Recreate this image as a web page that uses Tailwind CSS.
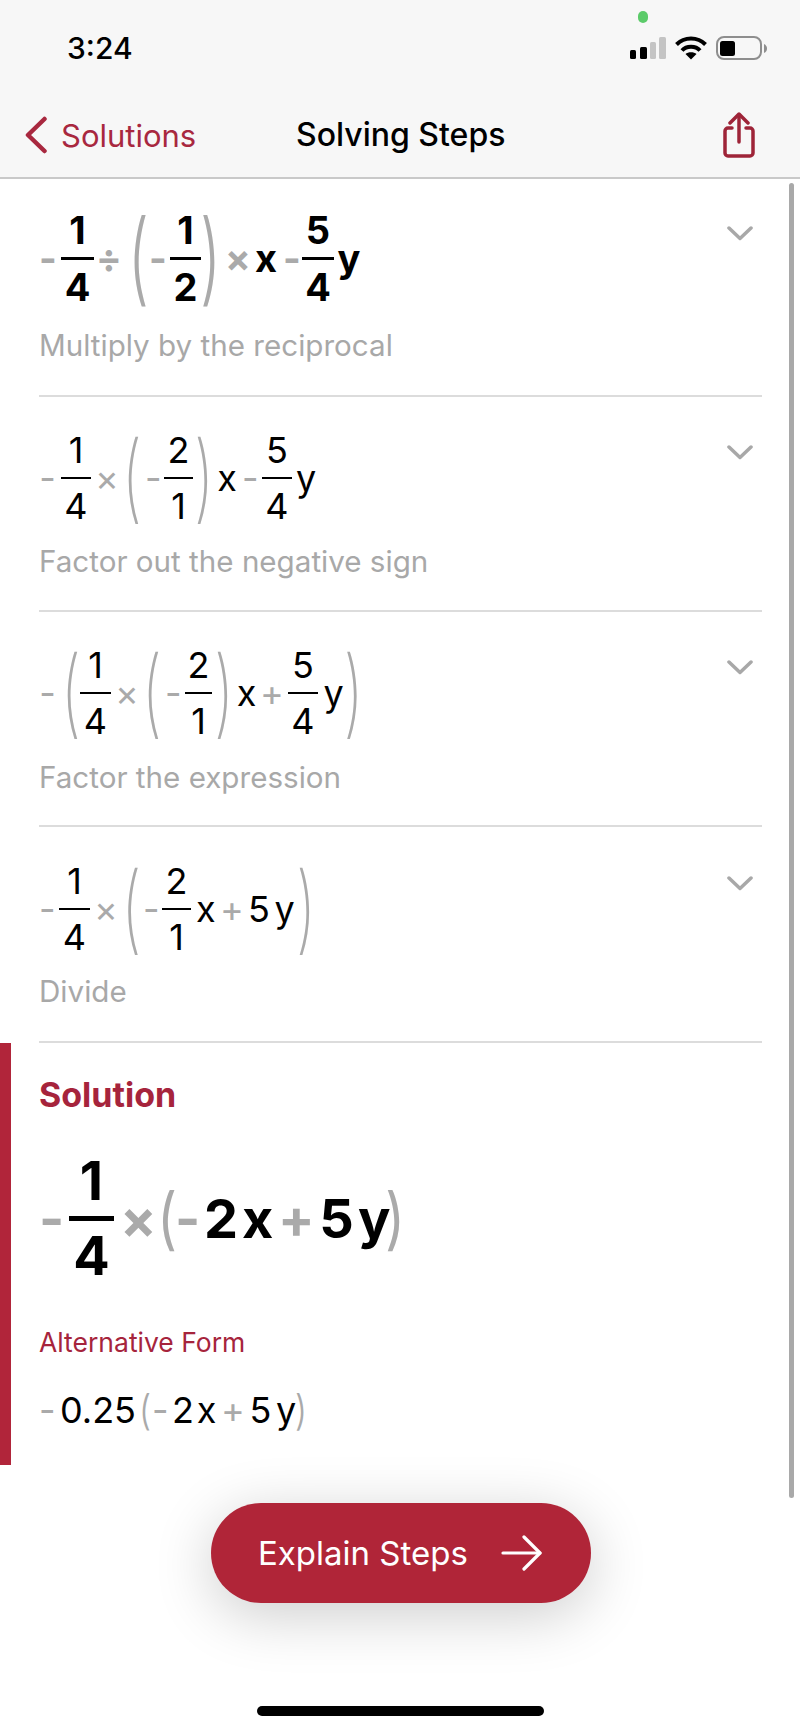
<!DOCTYPE html>
<html lang="en">
<head>
  <meta charset="UTF-8">
  <meta name="viewport" content="width=device-width, initial-scale=1.0">
  <title>Solving Steps</title>
  <script src="https://cdn.jsdelivr.net/npm/@tailwindcss/browser@4"></script>
</head>
<body class="bg-white text-black font-['Inter',sans-serif]">
<div class="relative w-[800px] h-[1731px] overflow-hidden bg-white">

  <!-- Header -->
  <header class="h-[179px] bg-[#f7f7f7] border-b-2 border-[#c9c9c9]">
    <div class="h-[96px] flex items-center pl-[67px]">
      <span class="text-[30px] font-medium leading-none">3:24</span>
      <div class="ml-auto mr-[33px] flex items-center">
        <svg width="36" height="24" viewBox="0 0 36 24">
          <rect x="0" y="14" width="6" height="9" rx="1.5" fill="#000"/>
          <rect x="10" y="11" width="7" height="12" rx="1.5" fill="#000"/>
          <rect x="20" y="6" width="6" height="17" rx="1.5" fill="#c4c4c4"/>
          <rect x="29" y="1" width="7" height="22" rx="1.5" fill="#c4c4c4"/>
        </svg>
        <svg class="ml-[9px]" width="32" height="24" viewBox="0 0 32 24" fill="none" stroke="#000" stroke-width="4">
          <path d="M1.5 8.5 C9.5 0.5 22.5 0.5 30.5 8.5"/>
          <path d="M7 14.5 C11.5 9.5 20.5 9.5 25 14.5"/>
          <path d="M16 23.5 L10.5 18 C13 15.6 19 15.6 21.5 18 Z" fill="#000" stroke="none"/>
        </svg>
        <svg class="ml-[9px]" width="51" height="24" viewBox="0 0 51 24">
          <rect x="1" y="1" width="44" height="22" rx="7" fill="none" stroke="#8e8e8e" stroke-width="2"/>
          <rect x="4" y="5" width="15" height="15" rx="2.5" fill="#000"/>
          <path d="M48 8 C50 9 51 10.5 51 12.5 C51 14.5 50 16 48 17 Z" fill="#8e8e8e"/>
        </svg>
      </div>
    </div>
    <div class="h-[78px] flex items-center pl-[25px] pr-[45px]">
      <div class="w-[271px] flex items-center">
        <svg width="22" height="38" viewBox="0 0 22 38" fill="none" stroke="#a8283f" stroke-width="4.5" stroke-linecap="round" stroke-linejoin="round">
          <path d="M19.5 3 L3 19 L19.5 35"/>
        </svg>
        <span class="ml-[14px] text-[31px] leading-none text-[#a8283f]">Solutions</span>
      </div>
      <span class="text-[32px] font-medium leading-none">Solving Steps</span>
      <svg class="ml-auto mt-[-1px]" width="32" height="46" viewBox="0 0 32 46" fill="none" stroke="#9e2438" stroke-width="3.5" stroke-linecap="round" stroke-linejoin="round">
        <path d="M9 16 H5 A3 3 0 0 0 2 19 V41 A3 3 0 0 0 5 44 H27 A3 3 0 0 0 30 41 V19 A3 3 0 0 0 27 16 H23"/>
        <path d="M16 30 V3"/>
        <path d="M7 11 L16 2 L25 11"/>
      </svg>
    </div>
  </header>

  <main class="pl-[39px] pr-[38px]">

    <!-- Step 1 -->
    <section class="h-[218px] pt-[31px] border-b-2 border-[#dcdcdc] flex items-start justify-between">
      <div>
        <div class="h-[96px] flex items-center text-[38px] font-bold text-[#aaa]">
          <span class="w-[17px] shrink-0 text-center">-</span>
          <div class="ml-[5px] w-[33px] shrink-0 flex flex-col items-center text-black"><span class="leading-[44px]">1</span><span class="my-[5px] w-full h-[3px] bg-black"></span><span class="leading-[44px]">4</span></div>
          <span class="ml-[1px] w-[28px] shrink-0 text-center">÷</span>
          <div class="ml-[11px] w-[9px] shrink-0 flex justify-center"><span class="font-light text-[60px] leading-none scale-y-[1.68] -translate-y-[2px]">(</span></div>
          <span class="ml-[6px] w-[17px] shrink-0 text-center">-</span>
          <div class="ml-[4px] w-[31px] shrink-0 flex flex-col items-center text-black"><span class="leading-[44px]">1</span><span class="my-[5px] w-full h-[3px] bg-black"></span><span class="leading-[44px]">2</span></div>
          <div class="ml-[5px] w-[9px] shrink-0 flex justify-center"><span class="font-light text-[60px] leading-none scale-y-[1.68] -translate-y-[2px]">)</span></div>
          <span class="ml-[10px] w-[26px] shrink-0 text-center">×</span>
          <span class="ml-[3px] w-[24px] shrink-0 text-center text-black">x</span>
          <span class="ml-[5px] w-[14px] shrink-0 text-center">-</span>
          <div class="ml-[5px] w-[32px] shrink-0 flex flex-col items-center text-black"><span class="leading-[44px]">5</span><span class="my-[5px] w-full h-[3px] bg-black"></span><span class="leading-[44px]">4</span></div>
          <span class="ml-[2px] w-[26px] shrink-0 text-center text-black">y</span>
        </div>
        <p class="mt-[19px] text-[29.6px] leading-[40px] text-[#a8a8a8]">Multiply by the reciprocal</p>
      </div>
      <svg class="mt-[16px] mr-[9px]" width="26" height="15" viewBox="0 0 26 15" fill="none" stroke="#a8a8a8" stroke-width="3.5" stroke-linecap="round" stroke-linejoin="round"><path d="M2 2 L13 12.5 L24 2"/></svg>
    </section>

    <!-- Step 2 -->
    <section class="h-[215px] pt-[35px] border-b-2 border-[#dcdcdc] flex items-start justify-between">
      <div>
        <div class="h-[92px] flex items-center text-[36px] text-[#aaa]">
          <span class="w-[17px] shrink-0 text-center">-</span>
          <div class="ml-[5px] w-[30px] shrink-0 flex flex-col items-center text-black"><span class="leading-[44px]">1</span><span class="my-[5px] w-full h-[2px] bg-black"></span><span class="leading-[44px]">4</span></div>
          <span class="ml-[3px] w-[26px] shrink-0 text-center">×</span>
          <div class="ml-[7px] w-[10px] shrink-0 flex justify-center"><span class="font-extralight text-[60px] leading-none scale-y-[1.6] -translate-y-[2px]">(</span></div>
          <span class="ml-[8px] w-[14px] shrink-0 text-center">-</span>
          <div class="ml-[5px] w-[29px] shrink-0 flex flex-col items-center text-black"><span class="leading-[44px]">2</span><span class="my-[5px] w-full h-[2px] bg-black"></span><span class="leading-[44px]">1</span></div>
          <div class="ml-[6px] w-[10px] shrink-0 flex justify-center"><span class="font-extralight text-[60px] leading-none scale-y-[1.6] -translate-y-[2px]">)</span></div>
          <span class="ml-[7px] w-[22px] shrink-0 text-center text-black">x</span>
          <span class="ml-[4px] w-[14px] shrink-0 text-center">-</span>
          <div class="ml-[6px] w-[30px] shrink-0 flex flex-col items-center text-black"><span class="leading-[44px]">5</span><span class="my-[5px] w-full h-[2px] bg-black"></span><span class="leading-[44px]">4</span></div>
          <span class="ml-[3px] w-[22px] shrink-0 text-center text-black">y</span>
        </div>
        <p class="mt-[17px] text-[29.6px] leading-[40px] text-[#a8a8a8]">Factor out the negative sign</p>
      </div>
      <svg class="mt-[13px] mr-[9px]" width="26" height="15" viewBox="0 0 26 15" fill="none" stroke="#a8a8a8" stroke-width="3.5" stroke-linecap="round" stroke-linejoin="round"><path d="M2 2 L13 12.5 L24 2"/></svg>
    </section>

    <!-- Step 3 -->
    <section class="h-[215px] pt-[35px] border-b-2 border-[#dcdcdc] flex items-start justify-between">
      <div>
        <div class="h-[92px] flex items-center text-[36px] text-[#aaa]">
          <span class="w-[17px] shrink-0 text-center">-</span>
          <div class="ml-[11px] w-[8px] shrink-0 flex justify-center"><span class="font-extralight text-[60px] leading-none scale-y-[1.6] -translate-y-[2px]">(</span></div>
          <div class="ml-[5px] w-[31px] shrink-0 flex flex-col items-center text-black"><span class="leading-[44px]">1</span><span class="my-[5px] w-full h-[2px] bg-black"></span><span class="leading-[44px]">4</span></div>
          <span class="ml-[4px] w-[24px] shrink-0 text-center">×</span>
          <div class="ml-[8px] w-[10px] shrink-0 flex justify-center"><span class="font-extralight text-[60px] leading-none scale-y-[1.6] -translate-y-[2px]">(</span></div>
          <span class="ml-[8px] w-[14px] shrink-0 text-center">-</span>
          <div class="ml-[6px] w-[27px] shrink-0 flex flex-col items-center text-black"><span class="leading-[44px]">2</span><span class="my-[5px] w-full h-[2px] bg-black"></span><span class="leading-[44px]">1</span></div>
          <div class="ml-[7px] w-[10px] shrink-0 flex justify-center"><span class="font-extralight text-[60px] leading-none scale-y-[1.6] -translate-y-[2px]">)</span></div>
          <span class="ml-[7px] w-[21px] shrink-0 text-center text-black">x</span>
          <span class="ml-[3px] w-[24px] shrink-0 text-center">+</span>
          <div class="ml-[4px] w-[30px] shrink-0 flex flex-col items-center text-black"><span class="leading-[44px]">5</span><span class="my-[5px] w-full h-[2px] bg-black"></span><span class="leading-[44px]">4</span></div>
          <span class="ml-[5px] w-[21px] shrink-0 text-center text-black">y</span>
          <div class="ml-[5px] w-[9px] shrink-0 flex justify-center"><span class="font-extralight text-[60px] leading-none scale-y-[1.6] -translate-y-[2px]">)</span></div>
        </div>
        <p class="mt-[18px] text-[29.6px] leading-[40px] text-[#a8a8a8]">Factor the expression</p>
      </div>
      <svg class="mt-[13px] mr-[9px]" width="26" height="15" viewBox="0 0 26 15" fill="none" stroke="#a8a8a8" stroke-width="3.5" stroke-linecap="round" stroke-linejoin="round"><path d="M2 2 L13 12.5 L24 2"/></svg>
    </section>

    <!-- Step 4 -->
    <section class="h-[216px] pt-[36px] border-b-2 border-[#dcdcdc] flex items-start justify-between">
      <div>
        <div class="h-[92px] flex items-center text-[36px] text-[#aaa]">
          <span class="w-[15px] shrink-0 text-center">-</span>
          <div class="ml-[5px] w-[31px] shrink-0 flex flex-col items-center text-black"><span class="leading-[44px]">1</span><span class="my-[5px] w-full h-[2px] bg-black"></span><span class="leading-[44px]">4</span></div>
          <span class="ml-[4px] w-[23px] shrink-0 text-center">×</span>
          <div class="ml-[10px] w-[9px] shrink-0 flex justify-center"><span class="font-extralight text-[60px] leading-none scale-y-[1.6] -translate-y-[2px]">(</span></div>
          <span class="ml-[7px] w-[14px] shrink-0 text-center">-</span>
          <div class="ml-[5px] w-[29px] shrink-0 flex flex-col items-center text-black"><span class="leading-[44px]">2</span><span class="my-[5px] w-full h-[2px] bg-black"></span><span class="leading-[44px]">1</span></div>
          <span class="ml-[5px] w-[18px] shrink-0 text-center text-black">x</span>
          <span class="ml-[6px] w-[24px] shrink-0 text-center">+</span>
          <span class="ml-[3px] w-[24px] shrink-0 text-center text-black">5</span>
          <span class="ml-[3px] w-[21px] shrink-0 text-center text-black">y</span>
          <div class="ml-[7px] w-[8px] shrink-0 flex justify-center"><span class="font-extralight text-[60px] leading-none scale-y-[1.6] -translate-y-[2px]">)</span></div>
        </div>
        <p class="mt-[16px] text-[29.6px] leading-[40px] text-[#a8a8a8]">Divide</p>
      </div>
      <svg class="mt-[13px] mr-[9px]" width="26" height="15" viewBox="0 0 26 15" fill="none" stroke="#a8a8a8" stroke-width="3.5" stroke-linecap="round" stroke-linejoin="round"><path d="M2 2 L13 12.5 L24 2"/></svg>
    </section>
  </main>

  <!-- Solution -->
  <section class="ml-0 h-[422px] w-[761px] border-l-[11px] border-[#b1253a] pl-[28px]">
    <h2 class="pt-[30px] text-[34px] leading-[44px] font-bold text-[#a6243c]">Solution</h2>
    <div class="mt-[41px] h-[120px] flex items-center text-[54px] font-bold text-[#aaa]">
      <span class="w-[22px] shrink-0 text-center">-</span>
      <div class="ml-[8px] w-[45px] shrink-0 flex flex-col items-center text-black"><span class="leading-[60px]">1</span><span class="my-[5px] w-full h-[5px] bg-black"></span><span class="leading-[60px]">4</span></div>
      <span class="ml-[6px] w-[33px] shrink-0 text-center">×</span>
      <div class="ml-[9px] w-[10px] shrink-0 flex justify-center"><span class="font-normal text-[54px] leading-none scale-y-[1.25]">(</span></div>
      <span class="ml-[3px] w-[21px] shrink-0 text-center">-</span>
      <span class="ml-[8px] w-[32px] shrink-0 text-center text-black">2</span>
      <span class="ml-[6px] w-[28px] shrink-0 text-center text-black">x</span>
      <span class="ml-[8px] w-[34px] shrink-0 text-center">+</span>
      <span class="ml-[7px] w-[35px] shrink-0 text-center text-black">5</span>
      <span class="ml-[4px] w-[32px] shrink-0 text-center text-black">y</span>
      <div class="w-[10px] shrink-0 flex justify-center"><span class="font-normal text-[54px] leading-none scale-y-[1.25]">)</span></div>
    </div>
    <p class="mt-[46px] text-[26.5px] leading-[36px] text-[#a6243c]">Alternative Form</p>
    <div class="mt-[28px] h-[44px] flex items-center text-[36px] text-[#aaa]">
      <span class="w-[16px] shrink-0 text-center">-</span>
      <span class="ml-[5px] w-[76px] shrink-0 text-center text-black">0.25</span>
      <div class="ml-[6px] w-[6px] shrink-0 flex justify-center"><span class="font-light scale-y-[1.15]">(</span></div>
      <span class="ml-[4px] w-[13px] shrink-0 text-center">-</span>
      <span class="ml-[6px] w-[24px] shrink-0 text-center text-black">2</span>
      <span class="ml-[1px] w-[21px] shrink-0 text-center text-black">x</span>
      <span class="ml-[4px] w-[23px] shrink-0 text-center">+</span>
      <span class="ml-[5px] w-[23px] shrink-0 text-center text-black">5</span>
      <span class="ml-[4px] w-[20px] shrink-0 text-center text-black">y</span>
      <div class="ml-[2px] w-[6px] shrink-0 flex justify-center"><span class="font-light scale-y-[1.15]">)</span></div>
    </div>
  </section>

  <!-- Scrollbar, floating button and home indicator sit over the page -->
  <span class="absolute left-[643px] top-[17px] -translate-x-1/2 -translate-y-1/2 w-[10px] h-[12px] rounded-full bg-[#5ccb6a]"></span>
  <div class="absolute left-[789px] top-[183px] w-[5px] h-[1315px] rounded-full bg-[#a9a9a9]"></div>
  <button class="absolute left-[211px] top-[1503px] w-[380px] h-[100px] rounded-full bg-[#b02538] text-white flex items-center pl-[47px] shadow-[0_12px_60px_rgba(0,0,0,0.2)]">
    <span class="text-[33px] leading-none">Explain Steps</span>
    <svg class="ml-[33px]" width="42" height="36" viewBox="0 0 42 36" fill="none" stroke="#fff" stroke-width="3.2" stroke-linecap="round" stroke-linejoin="round">
      <path d="M2 18 H39"/>
      <path d="M23 2 L39 18 L23 34"/>
    </svg>
  </button>
  <div class="absolute left-[257px] top-[1706px] w-[287px] h-[10px] rounded-full bg-black"></div>
</div>
</body>
</html>
